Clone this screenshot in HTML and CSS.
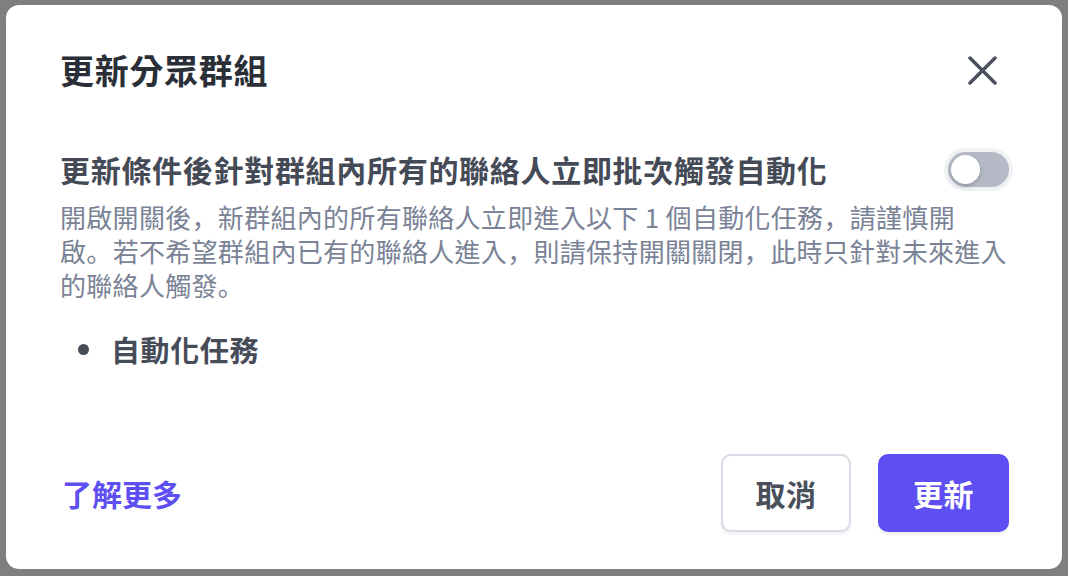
FILE: index.html
```html
<!DOCTYPE html>
<html lang="zh-Hant">
<head>
<meta charset="utf-8">
<title>更新分眾群組</title>
<link rel="stylesheet" href="styles.css">
</head>
<body>
<div class="backdrop">
  <div class="modal" role="dialog" aria-labelledby="dlg-title">
    <header class="modal-head">
      <h2 class="title" id="dlg-title">更新分眾群組</h2>
      <button class="close" type="button" aria-label="關閉">
        <svg viewBox="0 0 29 29" width="29" height="29" aria-hidden="true">
          <path d="M2 2 L27 27 M27 2 L2 27" fill="none" stroke="currentColor" stroke-width="3.5" stroke-linecap="round"/>
        </svg>
      </button>
    </header>
    <section class="modal-body">
      <div class="opt-row">
        <h3 class="opt-title">更新條件後針對群組內所有的聯絡人立即批次觸發自動化</h3>
        <span class="toggle" role="switch" aria-checked="false"><span class="knob"></span></span>
      </div>
      <p class="desc">開啟開關後<span class="p" lang="zh-Hans">，</span>新群組內的所有聯絡人立即進入以下 1 個自動化任務<span class="p" lang="zh-Hans">，</span>請謹慎開啟<span class="p" lang="zh-Hans">。</span>若不希望群組內已有的聯絡人進入<span class="p" lang="zh-Hans">，</span>則請保持開關關閉<span class="p" lang="zh-Hans">，</span>此時只針對未來進入的聯絡人觸發<span class="p" lang="zh-Hans">。</span></p>
      <ul class="tasks">
        <li class="task">自動化任務</li>
      </ul>
    </section>
    <footer class="modal-foot">
      <a class="more" href="#">了解更多</a>
      <div class="actions">
        <button class="btn btn-cancel" type="button">取消</button>
        <button class="btn btn-primary" type="button">更新</button>
      </div>
    </footer>
  </div>
</div>
</body>
</html>
```
FILE: styles.css
```css
* { box-sizing: border-box; }

html, body {
  margin: 0;
  padding: 0;
}

body {
  width: 1068px;
  height: 576px;
  background: #7f7f7f;
  font-family: "Noto Sans CJK TC", "Noto Sans", sans-serif;
  overflow: hidden;
}

.backdrop {
  height: 576px;
  padding: 5px 6px 7px 6px;
  display: flex;
}

.modal {
  flex: 1;
  background: #ffffff;
  border-radius: 13px;
  padding: 41px 54px 37px 54px;
  display: flex;
  flex-direction: column;
}

.modal-head {
  height: 48px;
  display: flex;
  align-items: center;
  justify-content: space-between;
}

.title {
  margin: 0;
  font-size: 34px;
  line-height: 48px;
  font-weight: 700;
  color: #2a2e37;
  letter-spacing: 0.7px;
}

.close {
  border: 0;
  background: none;
  padding: 0;
  margin-right: 11px;
  color: #4b505c;
  display: flex;
  cursor: pointer;
}

.modal-body {
  display: flex;
  flex-direction: column;
}

.opt-row {
  margin-top: 54px;
  height: 42px;
  display: flex;
  align-items: center;
  justify-content: space-between;
}

.opt-title {
  margin: 0;
  font-size: 30px;
  line-height: 42px;
  font-weight: 700;
  color: #454a57;
  letter-spacing: 0.7px;
}

.toggle {
  width: 61px;
  height: 35px;
  border-radius: 18px;
  background: #b5bac6;
  box-shadow: 0 0 0 4px #f0f1f4;
  padding: 3px;
  display: flex;
  align-items: center;
  margin-right: -1px;
}

.knob {
  width: 29px;
  height: 29px;
  border-radius: 50%;
  background: #ffffff;
  box-shadow: 0 2px 4px rgba(40, 45, 60, 0.25);
}

.desc {
  margin: 10px 0 0 0;
  width: 947.5px;
  font-size: 26px;
  line-height: 34px;
  color: #7a8396;
  letter-spacing: 0.3px;
  line-break: strict;
}

.desc .p {
  font-family: "Noto Sans CJK SC", "Noto Sans CJK TC", sans-serif;
}

.tasks {
  list-style: none;
  margin: 27px 0 0 0;
  padding: 0;
}

.task {
  display: flex;
  align-items: center;
  height: 40px;
  font-size: 29px;
  font-weight: 700;
  color: #474c59;
  letter-spacing: 0.6px;
}

.task::before {
  content: "";
  width: 11px;
  height: 11px;
  border-radius: 50%;
  background: #474c59;
  margin: 0 22px 0 18px;
}

.modal-foot {
  margin-top: auto;
  display: flex;
  align-items: center;
  justify-content: space-between;
}

.more {
  font-size: 30px;
  font-weight: 700;
  color: #5d4ff2;
  text-decoration: none;
  margin-left: 2px;
}

.actions {
  display: flex;
  gap: 27px;
}

.btn {
  height: 78px;
  border-radius: 10px;
  font-family: inherit;
  font-size: 30px;
  font-weight: 700;
  letter-spacing: 0.6px;
  cursor: pointer;
  box-shadow: 0 3px 2px rgba(30, 40, 70, 0.06);
}

.btn-cancel {
  width: 130px;
  background: #ffffff;
  border: 2px solid #d8dbe6;
  color: #4a4f5c;
}

.btn-primary {
  width: 131px;
  background: #5e4ff2;
  border: 0;
  color: #ffffff;
  margin-right: -1px;
}
```
